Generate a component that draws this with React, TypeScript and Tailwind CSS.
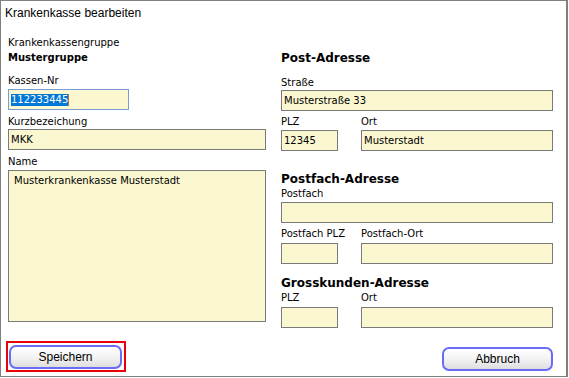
import React from "react";

const font = { fontFamily: '"DejaVu Sans", Verdana, sans-serif' };

function Label({ children, className = "" }: { children: React.ReactNode; className?: string }) {
  return <div className={`text-[10px] leading-[13px] text-black whitespace-nowrap ${className}`}>{children}</div>;
}

function Heading({ children, className = "" }: { children: React.ReactNode; className?: string }) {
  return <div className={`text-[12px] leading-[16px] font-bold text-black whitespace-nowrap ${className}`}>{children}</div>;
}

function Field({ value = "", className = "" }: { value?: string; className?: string }) {
  return (
    <div className={`h-[21px] bg-[#faf7d1] border border-[#7a7a7a] flex items-center px-[2px] text-[10px] text-black whitespace-nowrap ${className}`}>
      {value}
    </div>
  );
}

function GlassButton({ label, className = "" }: { label: string; className?: string }) {
  return (
    <div
      className={`h-[24px] rounded-[7px] border-2 border-[#6a6cf7] bg-gradient-to-b from-white via-[#f3f3f3] to-[#dedede] flex items-center justify-center text-[12px] text-black font-['Liberation_Sans',Arial,sans-serif] ${className}`}
    >
      {label}
    </div>
  );
}

export default function App() {
  return (
    <div className="w-[569px] h-[378px] bg-white overflow-hidden" style={font}>
      <div className="w-[568px] h-[377px] border border-[#808080] border-r-2 flex flex-col">
        {/* title */}
        <div className="pl-[4px] pt-[5px] text-[12px] leading-[14px] text-black font-['Liberation_Sans',Arial,sans-serif]">
          Krankenkasse bearbeiten
        </div>

        <div className="flex pl-[7px]">
          {/* left column */}
          <div className="w-[258px] flex flex-col">
            <Label className="mt-[16px]">Krankenkassengruppe</Label>
            <Label className="font-bold mt-[2px]">Mustergruppe</Label>
            <Label className="mt-[10px]">Kassen-Nr</Label>
            <div className="mt-[2px] h-[21px] w-[121px] bg-[#faf7d1] border border-[#7a9cd3] flex items-center px-[2px] text-[10px]">
              <span className="bg-[#0078d7] text-white leading-[12px]">112233445</span>
              <span className="w-[1px] h-[12px] bg-[#c07040]" />
            </div>
            <Label className="mt-[5px]">Kurzbezeichung</Label>
            <Field value="MKK" className="mt-[1px]" />
            <Label className="mt-[5px]">Name</Label>
            <div className="mt-[2px] h-[152px] bg-[#faf7d1] border border-[#7a7a7a] px-[5px] pt-[3px] text-[10px] leading-[13px]">
              Musterkrankenkasse Musterstadt
            </div>
          </div>

          {/* right column */}
          <div className="w-[272px] ml-[15px] flex flex-col">
            <Heading className="mt-[30px]">Post-Adresse</Heading>
            <Label className="mt-[10px]">Straße</Label>
            <Field value="Musterstraße 33" className="mt-[1px]" />
            <div className="flex gap-[23px] mt-[4px]">
              <div className="w-[57px] flex flex-col">
                <Label>PLZ</Label>
                <Field value="12345" className="mt-[2px]" />
              </div>
              <div className="flex-1 flex flex-col">
                <Label>Ort</Label>
                <Field value="Musterstadt" className="mt-[2px]" />
              </div>
            </div>
            <Heading className="mt-[20px]">Postfach-Adresse</Heading>
            <Label>Postfach</Label>
            <Field className="mt-[2px]" />
            <div className="flex gap-[23px] mt-[4px]">
              <div className="w-[57px] flex flex-col">
                <Label>Postfach PLZ</Label>
                <Field className="mt-[3px]" />
              </div>
              <div className="flex-1 flex flex-col">
                <Label>Postfach-Ort</Label>
                <Field className="mt-[3px]" />
              </div>
            </div>
            <Heading className="mt-[11px]">Grosskunden-Adresse</Heading>
            <div className="flex gap-[23px]">
              <div className="w-[57px] flex flex-col">
                <Label>PLZ</Label>
                <Field className="mt-[3px]" />
              </div>
              <div className="flex-1 flex flex-col">
                <Label>Ort</Label>
                <Field className="mt-[3px]" />
              </div>
            </div>
          </div>
        </div>

        {/* buttons */}
        <div className="flex justify-between items-center pl-[5px] pr-[13px] mt-auto mb-[4px]">
          <div className="w-[120px] h-[31px] border-2 border-[#e8000b] pl-[1px] pt-[2px]">
            <GlassButton label="Speichern" className="w-[113px]" />
          </div>
          <GlassButton label="Abbruch" className="w-[111px] h-[23px] mb-[-4px]" />
        </div>
      </div>
    </div>
  );
}
